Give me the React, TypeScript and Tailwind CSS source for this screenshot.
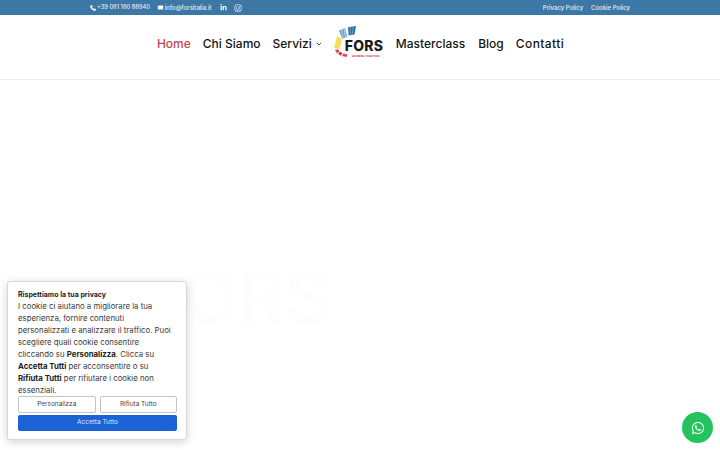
import { FaLinkedinIn, FaInstagram, FaWhatsapp } from 'react-icons/fa'
import { Phone, Mail, ChevronDown } from 'lucide-react'

function Logo() {
  return (
    <div className="relative h-[36px] w-[48px]">
      <svg viewBox="0 0 48 36" className="absolute inset-0 size-full overflow-visible">
        <path d="M5 5.500l6-2.500 2.200 8.500-5 2.500z" fill="#6ea3c8" />
        <path d="M7.500 4.500l1.500 8.800M10 3.500l1.500 8.800" stroke="#ffffff" strokeWidth=".5" />
        <path d="M14 2.200l8-1.200-1.500 8.500-6 1z" fill="#2f6f9f" />
        <path d="M16.500 1.800l-.3 8.500M19.200 1.400l-1 8.500" stroke="#a9c8de" strokeWidth=".5" />
        <path d="M3 11l5 3.500-2.500 9.500-5.500-1z" fill="#f3e05a" />
        <path d="M1 25l3-.8 1.500 2-2.500 2.300z" fill="#d9485a" />
        <path d="M4 28.500l2.500-1.800 2 1.500-2 2.600z" fill="#c8303f" />
        <path d="M8 31l1.500-2.500 4 1-1 2.500z" fill="#d9485a" />
      </svg>
      <span className="absolute left-[11px] top-[14px] text-[14px] leading-[14px] font-extrabold tracking-[0.2px] text-[#1b1b1b]">
        FORS
      </span>
      <span className="absolute left-[18px] top-[29px] text-[2.6px] leading-[4px] font-bold whitespace-nowrap text-[#c8303f]">
        GROWING TOGETHER
      </span>
    </div>
  )
}

export default function App() {
  return (
    <div className="relative h-[450px] w-[720px] overflow-hidden bg-white font-['Inter',sans-serif]">
      <div className="flex h-[15px] items-center justify-between bg-[#3c77a5] pl-[90px] pr-[90px] text-[6px] font-medium text-[#e6eef5]">
        <div className="flex items-center">
          <Phone className="mr-[1px] size-[6px] fill-white text-white" />
          <span className="text-[5.700px]">+39 081 180 88940</span>
          <Mail className="ml-[7px] mr-[1px] size-[7px] fill-white text-[#3c77a5]" />
          <span>info@forsitalia.it</span>
          <FaLinkedinIn className="ml-[8px] size-[7px] text-white" />
          <FaInstagram className="ml-[7px] size-[8px] text-white" />
        </div>
        <div className="flex gap-[8px]">
          <span>Privacy Policy</span>
          <span>Cookie Policy</span>
        </div>
      </div>

      <div className="flex h-[65px] items-start justify-center border-b border-[#eeeeee] pl-[1px] text-[12px] font-medium text-[#151515]">
        <div className="flex items-center pt-[10px]">
          <span className="mt-[2px] text-[#c2474f]">Home</span>
          <span className="mt-[2px] ml-[12px]">Chi Siamo</span>
          <span className="mt-[2px] ml-[12px]">Servizi</span>
          <ChevronDown className="mt-[2px] ml-[3px] size-[8px] text-[#333333]" strokeWidth={2.5} />
          <span className="ml-[11px]"><Logo /></span>
          <span className="mt-[2px] ml-[14px]">Masterclass</span>
          <span className="mt-[2px] ml-[13px]">Blog</span>
          <span className="mt-[2px] ml-[12px] tracking-[0.4px]">Contatti</span>
        </div>
      </div>

      {/* faint hero heading, almost white on white */}
      <div className="absolute left-[182px] top-[254px] text-[72px] leading-[86px] font-semibold text-[#fdfdfd]">ORS</div>

      <div className="absolute left-[7px] top-[281px] w-[180px] rounded-[3px] border border-[#d8d8d8] bg-white pl-[10px] pr-[9px] pt-[8px] pb-[8px] shadow-[0_2px_8px_rgba(0,0,0,0.18)]">
        <p className="text-[7px] leading-[10px] font-bold text-[#222222]">Rispettiamo la tua privacy</p>
        <p className="text-[7.800px] leading-[12px] whitespace-nowrap text-[#3a3a3a]">
          I cookie ci aiutano a migliorare la tua
          <br />
          esperienza, fornire contenuti
          <br />
          personalizzati e analizzare il traffico. Puoi
          <br />
          scegliere quali cookie consentire
          <br />
          cliccando su <b className="text-[#222222]">Personalizza</b>. Clicca su
          <br />
          <b className="text-[#222222]">Accetta Tutti</b> per acconsentire o su
          <br />
          <b className="text-[#222222]">Rifiuta Tutti</b> per rifiutare i cookie non
          <br />
          essenziali.
        </p>
        <div className="grid grid-cols-2 gap-[4px]">
          <button className="h-[17px] rounded-[2px] border border-[#c4c4c4] bg-white text-[6.500px] text-[#444444]">Personalizza</button>
          <button className="h-[17px] rounded-[2px] border border-[#c4c4c4] bg-white text-[6.500px] text-[#444444]">Rifiuta Tutto</button>
        </div>
        <button className="mt-[2px] block h-[16px] w-full rounded-[2px] bg-[#1a62d6] text-[6.500px] text-[#dfe9fa]">Accetta Tutto</button>
      </div>

      <div className="absolute left-[682px] top-[412px] flex size-[31px] items-center justify-center rounded-full bg-[#25c35f]">
        <FaWhatsapp className="size-[14px] text-white" />
      </div>
    </div>
  )
}
